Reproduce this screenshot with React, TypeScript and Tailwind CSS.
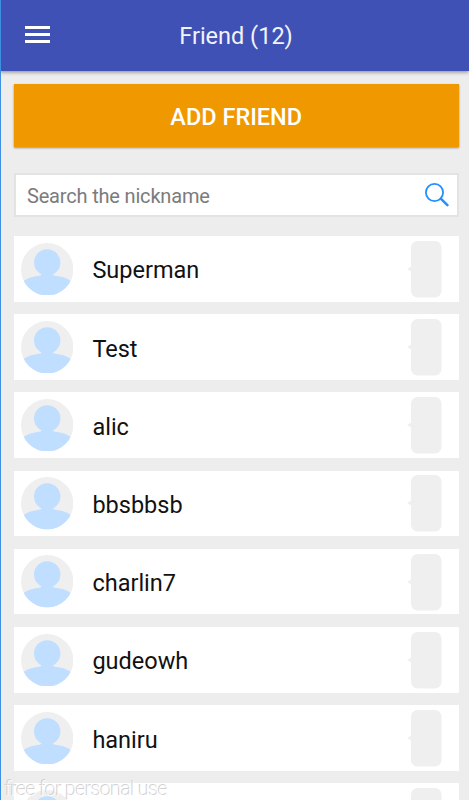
type Friend = {
  id: number;
  nickname: string;
};

const friends: Friend[] = [
  { id: 1, nickname: "Superman" },
  { id: 2, nickname: "Test" },
  { id: 3, nickname: "alic" },
  { id: 4, nickname: "bbsbbsb" },
  { id: 5, nickname: "charlin7" },
  { id: 6, nickname: "gudeowh" },
  { id: 7, nickname: "haniru" },
  { id: 8, nickname: "" },
];

function Avatar() {
  return (
    <svg viewBox="0 0 52 52" className="ml-[6.5px] h-[52.4px] w-[52.4px] shrink-0">
      <defs>
        <clipPath id="avatar">
          <circle cx="26" cy="26" r="26" />
        </clipPath>
      </defs>
      <circle cx="26" cy="26" r="26" fill="#efefef" />
      <g clipPath="url(#avatar)" fill="#c0deff">
        <circle cx="26" cy="19.3" r="13.1" />
        <path d="M20.500 29v1.800q0 1.400-2.500 1.800C12 33.200 6 35 2 38V52h48V38c-4-3-10-4.800-16-5.400q-2.500-.4-2.500-1.800V29z" />
      </g>
    </svg>
  );
}

function StatusBubble() {
  return (
    <svg viewBox="0 0 35 58" className="mr-[17px] h-[58px] w-[35px] shrink-0">
      <rect x="4" y="1" width="30.500" height="56.500" rx="6.500" fill="#efefef" />
      <path d="M0 29l4.500-2.500v5z" fill="#efefef" />
    </svg>
  );
}

function FriendRow({ friend }: { friend: Friend }) {
  return (
    <li className="flex h-[65.6px] shrink-0 items-center bg-white">
      <Avatar />
      <span className="ml-[19.500px] flex-1 pt-[3.200px] text-[23.500px] leading-7 text-[#111]">
        {friend.nickname}
      </span>
      <StatusBubble />
    </li>
  );
}

export default function App() {
  return (
    <div className="relative flex h-[800px] w-[469px] flex-col overflow-hidden bg-[#ededed] font-[Roboto,sans-serif]">
      <header className="relative flex h-[71px] shrink-0 items-center justify-center bg-[#3f51b5] shadow-[0_1px_4px_rgba(0,0,0,0.45)]">
        <button className="absolute top-[26px] left-[25px] flex w-[25px] flex-col gap-[4px]">
          <span className="h-[3px] w-full bg-white" />
          <span className="h-[3px] w-full bg-white" />
          <span className="h-[3px] w-full bg-white" />
        </button>
        <h1 className="pt-[2px] pl-[3px] text-[23.500px] text-[#f2f3fa]">Friend (12)</h1>
      </header>

      <main className="flex flex-1 flex-col pr-[10.500px] pl-[14px]">
        <button className="mt-[13px] h-[63px] shrink-0 bg-[#f09800] pt-[4px] text-[23.500px] font-medium text-white shadow-[0_1px_2px_rgba(0,0,0,0.4)]">
          ADD FRIEND
        </button>

        <div className="mt-[26px] flex h-[44px] shrink-0 items-center border-2 border-[#e3e3e3] bg-white">
          <input
            className="min-w-0 flex-1 pt-[2px] pl-[11px] text-[20px] tracking-[-0.18px] outline-none placeholder:text-[#7b7b7b]"
            placeholder="Search the nickname"
          />
          <svg viewBox="0 0 24 24" className="mr-[8px] h-[24px] w-[24px]" fill="none" stroke="#2490ff">
            <circle cx="9.500" cy="9.500" r="8.600" strokeWidth="1.800" />
            <path d="M15.800 15.600l6.600 6.600" strokeWidth="2.500" strokeLinecap="round" />
          </svg>
        </div>

        <ul className="mt-[19px] flex flex-col gap-[12.600px]">
          {friends.map((friend) => (
            <FriendRow key={friend.id} friend={friend} />
          ))}
        </ul>
      </main>

      <div className="absolute inset-y-0 left-0 w-px bg-[#3f8fe3]" />
      <p className="absolute top-[777px] left-[5px] text-[20px] leading-6 font-light tracking-[-0.850px] whitespace-nowrap text-white/70 [text-shadow:-1px_-1px_0_#d0d0d0]">
        free for personal use
      </p>
    </div>
  );
}
